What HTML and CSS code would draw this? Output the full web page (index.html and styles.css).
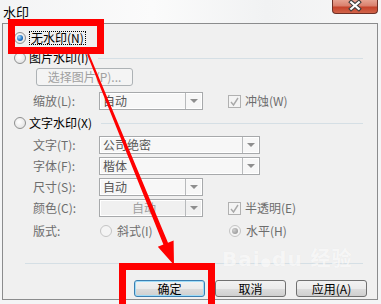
FILE: index.html
```html
<!DOCTYPE html>
<html lang="zh-CN">
  <head>
    <meta charset="UTF-8" />
    <title>水印</title>
    <link rel="stylesheet" href="styles.css">
  </head>
  <body>
    <div class="window">
      <div class="titlebar">
        <span class="title">水印</span>
        <div class="close">
          <svg width="46" height="14" viewBox="0 0 46 14">
            <path d="M19 3 L27 10 M27 3 L19 10" stroke="#3d3d3d" stroke-width="4.4" stroke-linecap="square" />
            <path d="M19 3 L27 10 M27 3 L19 10" stroke="#ffffff" stroke-width="2.2" stroke-linecap="square" />
          </svg>
        </div>
      </div>
      <div class="panel">
        <div class="opt"><span class="radio on"></span><span class="focus">无水印(N)</span></div>
        <div class="opt"><span class="radio"></span><span>图片水印(I)</span><span class="rule"></span></div>
        <div class="btn pick">选择图片(P)...</div>
        <div class="sub">
          <span class="lbl">缩放(L):</span>
          <div class="combo"><span class="val">自动</span><span class="drop"></span></div>
          <span class="check"><svg width="11" height="11" viewBox="0 0 11 11"><path d="M2 6 L4.5 9 L9 2" fill="none" stroke="#a9a9a9" stroke-width="1.4" /></svg></span>
          <span class="dim">冲蚀(W)</span>
        </div>
        <div class="opt"><span class="radio"></span><span>文字水印(X)</span><span class="rule"></span></div>
        <div class="sub">
          <span class="lbl">文字(T):</span>
          <div class="combo wide"><span class="val">公司绝密</span><span class="drop"></span></div>
        </div>
        <div class="sub">
          <span class="lbl">字体(F):</span>
          <div class="combo wide"><span class="val">楷体</span><span class="drop"></span></div>
        </div>
        <div class="sub">
          <span class="lbl">尺寸(S):</span>
          <div class="combo"><span class="val">自动</span><span class="drop"></span></div>
        </div>
        <div class="sub">
          <span class="lbl">颜色(C):</span>
          <div class="combo off"><span class="val">自动</span><span class="drop"></span></div>
          <span class="check"><svg width="11" height="11" viewBox="0 0 11 11"><path d="M2 6 L4.5 9 L9 2" fill="none" stroke="#a9a9a9" stroke-width="1.4" /></svg></span>
          <span class="dim">半透明(E)</span>
        </div>
        <div class="sub row">
          <span class="lbl">版式:</span>
          <span class="pair"><span class="radio off"></span><span class="dim">斜式(I)</span></span>
          <span class="pair right"><span class="radio off on-gray"></span><span class="dim">水平(H)</span></span>
        </div>
        <div class="bottomrule"></div>
        <div class="btns">
          <div class="btn push default">确定</div>
          <div class="btn push">取消</div>
          <div class="btn push">应用(A)</div>
        </div>
      </div>
    </div>

    <div class="stamp">Bai<span class="paw">●</span>du 经验</div>

    <div class="redbox first"></div>
    <div class="redbox second"></div>
    <svg class="arrow" width="381" height="304" viewBox="0 0 381 304">
      <polygon points="88.9,53.6 168,242.7 173.6,240.4 174,265 157.8,246.8 163.4,244.5 87.1,54.4" fill="#ff0000" />
    </svg>
  </body>
</html>
```

FILE: styles.css
```css
* {
  margin: 0px;
  padding: 0px;
  box-sizing: border-box;
}
body {
  width: 381px;
  height: 304px;
  overflow: hidden;
  background-color: #f4f5f6;
  font-family: "Noto Sans CJK SC", "Liberation Sans", sans-serif;
  font-size: 12px;
  line-height: 14px;
  color: #000;
}
.titlebar {
  height: 23px;
  display: flex;
  justify-content: space-between;
  align-items: flex-start;
  background: linear-gradient(to right, #f3f4f5, #fbfbfb 40%, #f1f2f3 70%, #f7f7f7);
}
.title {
  font-size: 13px;
  margin: 5px 0 0 3px;
}
.close {
  width: 46px;
  height: 14px;
  margin-right: 3px;
  border: 1px solid #6e3026;
  border-top: none;
  border-radius: 0 0 4px 4px;
  background: linear-gradient(#e7a291 0%, #d9806d 45%, #c6432b 55%, #d1644a 100%);
  display: flex;
  justify-content: center;
  align-items: center;
}
.close svg {
  display: block;
  margin-top: -1px;
}
.panel {
  height: 277px;
  margin: 0 3px 0 2px;
  border: 1px solid #8b8c8d;
  background-color: #f0f0f0;
  padding: 0 14px 0 11px;
  display: flex;
  flex-direction: column;
}
.opt {
  height: 14px;
  display: flex;
  align-items: center;
  gap: 3px;
  margin-top: 6px;
}
.opt:first-child {
  margin-top: 7px;
}
.focus {
  border: 1px dotted #000;
  padding: 0 1px;
  line-height: 12px;
}
.opt .rule {
  flex: 1;
  height: 1px;
  background-color: #d5dfe5;
  margin-left: 6px;
}
.radio {
  width: 12px;
  height: 12px;
  border-radius: 50%;
  border: 1px solid #8e8f8f;
  background: radial-gradient(circle at 40% 40%, #ffffff, #dcdcdc);
  display: flex;
  justify-content: center;
  align-items: center;
  flex-shrink: 0;
}
.radio.on::after {
  content: "";
  width: 6px;
  height: 6px;
  border-radius: 50%;
  background: radial-gradient(circle at 35% 35%, #a9e3ff, #1c6fc2 60%, #0e3f7a);
}
.radio.off {
  border-color: #c4c4c4;
  background: #f4f4f4;
}
.radio.on-gray::after {
  content: "";
  width: 6px;
  height: 6px;
  border-radius: 50%;
  background: radial-gradient(circle at 35% 35%, #d0d0d0, #8a8a8a);
}
.btn {
  display: flex;
  justify-content: center;
  align-items: center;
  border-radius: 3px;
}
.pick {
  width: 97px;
  height: 18px;
  margin: 3px 0 0 22px;
  border: 1px solid #adb2b5;
  background-color: #f4f4f4;
  color: #a0a0a0;
}
.sub {
  height: 18px;
  display: flex;
  align-items: center;
  padding-left: 19px;
  margin-top: 3px;
  color: #6d6d6d;
}
.pick + .sub,
.opt + .sub {
  margin-top: 6px;
}
.lbl {
  width: 66px;
}
.combo {
  width: 104px;
  height: 18px;
  display: flex;
  border: 1px solid #a7a9ab;
  background-color: #f7f7f7;
  box-shadow: inset 0 0 0 1px #ffffff;
}
.combo.wide {
  width: 161px;
}
.combo .val {
  flex: 1;
  padding-left: 3px;
  line-height: 16px;
  color: #555;
}
.combo.off {
  background-color: #f0f0f0;
}
.combo.off .val {
  text-align: center;
  color: #a0a0a0;
}
.drop {
  width: 17px;
  border-left: 1px solid #b8babc;
  display: flex;
  justify-content: center;
  align-items: center;
}
.drop::after {
  content: "";
  border-left: 4px solid transparent;
  border-right: 4px solid transparent;
  border-top: 4px solid #8e8e8e;
}
.check {
  width: 13px;
  height: 13px;
  margin: 0 4px 0 25px;
  border: 1px solid #b1b1b1;
  background-color: #f4f4f4;
  display: flex;
  justify-content: center;
  align-items: center;
}
.dim {
  color: #6d6d6d;
}
.row {
  height: 14px;
  margin-top: 7px;
}
.pair {
  width: 104px;
  display: flex;
  align-items: center;
  gap: 5px;
  padding-left: 1px;
}
.pair.right {
  margin-left: 25px;
}
.bottomrule {
  height: 1px;
  margin: 25px 0 0 11px;
  background-color: #d5dfe5;
}
.btns {
  display: flex;
  justify-content: flex-end;
  gap: 10px;
  margin: 16px -4px 0 0;
}
.push {
  width: 71px;
  height: 17px;
  border: 1px solid #707070;
  background: linear-gradient(#f2f2f2 0%, #ebebeb 50%, #dddddd 51%, #cfcfcf 100%);
}
.push.default {
  border-color: #3c7fb1;
  box-shadow: inset 0 0 0 1px #9fdcf8;
}
.stamp {
  position: absolute;
  left: 222px;
  top: 252px;
  font-family: "DejaVu Sans", "Noto Sans CJK SC", sans-serif;
  font-size: 20px;
  font-weight: bold;
  color: rgba(255, 255, 255, 0.7);
  text-shadow: 0 0 1px rgba(0, 0, 0, 0.05);
  letter-spacing: 1px;
}
.paw {
  font-size: 12px;
}
.redbox {
  position: absolute;
  border: 7px solid #ff0000;
}
.redbox.first {
  left: 8px;
  top: 19px;
  width: 96px;
  height: 35px;
}
.redbox.second {
  left: 119px;
  top: 263px;
  width: 96px;
  height: 50px;
}
.arrow {
  position: absolute;
  left: 0;
  top: 0;
}
```
